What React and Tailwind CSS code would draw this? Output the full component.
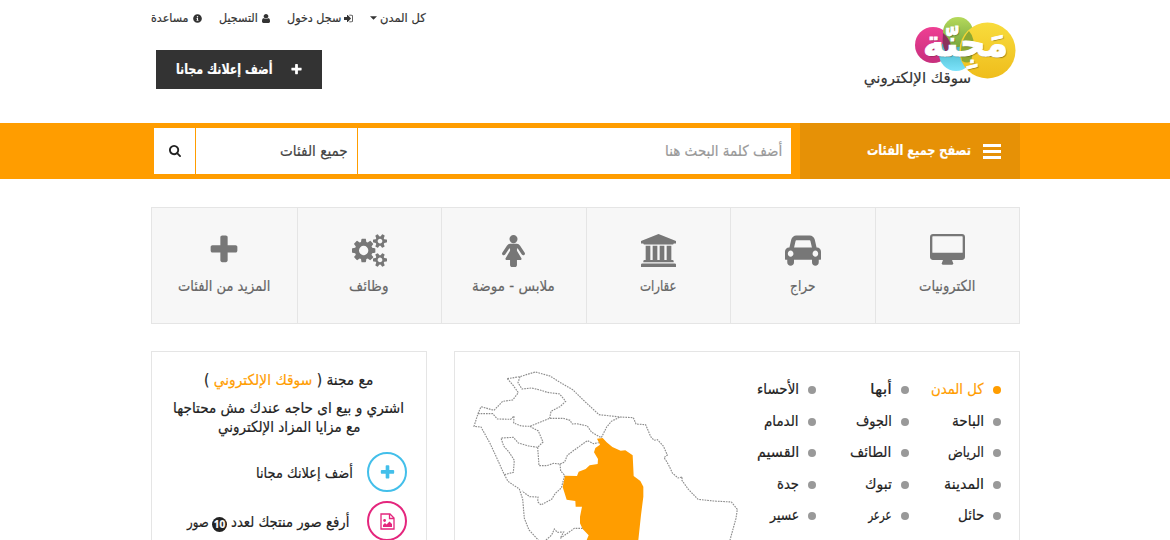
import { useLayoutEffect, useRef } from "react";
import { FaInfoCircle } from "react-icons/fa";

const ICONS = {
  plus: ["0 0 1792 1792", "M1600 736v192q0 40-28 68t-68 28h-416v416q0 40-28 68t-68 28h-192q-40 0-68-28t-28-68v-416h-416q-40 0-68-28t-28-68v-192q0-40 28-68t68-28h416v-416q0-40 28-68t68-28h192q40 0 68 28t28 68v416h416q40 0 68 28t28 68z"],
  desktop: ["0 0 1920 1792", "M1792 992v-832q0-13-9.5-22.5t-22.5-9.5h-1600q-13 0-22.5 9.5t-9.5 22.5v832q0 13 9.5 22.5t22.5 9.5h1600q13 0 22.5-9.5t9.5-22.5zm128-832v1088q0 66-47 113t-113 47h-544q0 37 16 77.5t32 71 16 43.5q0 26-19 45t-45 19h-512q-26 0-45-19t-19-45q0-14 16-44t32-70 16-78h-544q-66 0-113-47t-47-113v-1088q0-66 47-113t113-47h1600q66 0 113 47t47 113z"],
  car: ["0 0 2048 1792", "M480 1088q0-66-47-113t-113-47-113 47-47 113 47 113 113 47 113-47 47-113zm36-320h1016l-89-357q-2-8-14-17.5t-21-9.5h-768q-9 0-21 9.5t-14 17.5zm1372 320q0-66-47-113t-113-47-113 47-47 113 47 113 113 47 113-47 47-113zm160-96v384q0 14-9 23t-23 9h-96v128q0 80-56 136t-136 56-136-56-56-136v-128h-1024v128q0 80-56 136t-136 56-136-56-56-136v-128h-96q-14 0-23-9t-9-23v-384q0-93 65.5-158.5t158.5-65.5h28l105-419q23-94 104-157.5t179-63.5h768q98 0 179 63.5t104 157.5l105 419h28q93 0 158.5 65.5t65.5 158.5z"],
  bank: ["0 0 1920 1792", "M960 0l960 384v128h-128q0 26-20.5 45t-48.5 19h-1526q-28 0-48.5-19t-20.5-45h-128v-128zm-704 640h256v768h128v-768h256v768h128v-768h256v768h128v-768h256v768h59q28 0 48.5 19t20.5 45v64h-1664v-64q0-26 20.5-45t48.5-19h59v-768zm1595 960q28 0 48.5 19t20.5 45v128h-1920v-128q0-26 20.5-45t48.5-19h1782z"],
  female: ["128 32 1280 1760", "M1408 1056q0 40-28 68t-68 28q-51 0-80-43l-227-341h-45v132l247 411q9 15 9 33 0 26-19 45t-45 19h-192v272q0 46-33 79t-79 33h-160q-46 0-79-33t-33-79v-272h-192q-26 0-45-19t-19-45q0-18 9-33l247-411v-132h-45l-227 341q-29 43-80 43-40 0-68-28t-28-68q0-29 16-53l256-384q73-107 176-107h384q103 0 176 107l256 384q16 24 16 53zm-416-800q0 93-65.5 158.5t-158.5 65.5-158.5-65.5-65.5-158.5 65.5-158.5 158.5-65.5 158.5 65.5 65.5 158.5z"],
  cogs: ["0 0 1920 1792", "M896 896q0-106-75-181t-181-75-181 75-75 181 75 181 181 75 181-75 75-181zM1664 1408q0-52-38-90t-90-38-90 38-38 90q0 53 37.5 90.5t90.5 37.5 90.5-37.5 37.5-90.5zM1664 384q0-52-38-90t-90-38-90 38-38 90q0 53 37.5 90.5t90.5 37.5 90.5-37.5 37.5-90.5zM1280 805v185q0 10-7 19.5t-16 10.5l-155 24q-11 35-32 76 34 48 90 115 7 11 7 20 0 12-7 19-23 30-82.5 89.5t-78.5 59.5q-11 0-21-7l-115-90q-37 19-77 31-11 108-23 155-7 24-30 24h-186q-11 0-20-7.5t-10-17.5l-23-153q-34-10-75-31l-118 89q-7 7-20 7-11 0-21-8-144-133-144-160 0-9 7-19 10-14 41-53t47-61q-23-44-35-82l-152-24q-10-1-17-9.5t-7-19.5v-185q0-10 7-19.5t16-10.5l155-24q11-35 32-76-34-48-90-115-7-11-7-20 0-12 7-20 22-30 82-89t79-59q11 0 21 7l115 90q34-18 77-32 11-108 23-154 7-24 30-24h186q11 0 20 7.5t10 17.5l23 153q34 10 75 31l118-89q8-7 20-7 11 0 21 8 144 133 144 160 0 8-7 19-12 16-42 54t-45 60q23 48 34 82l152 23q10 2 17 10.5t7 19.5zM1920 1338v140q0 16-149 31-12 27-30 52 51 113 51 138 0 4-4 7-122 71-124 71-8 0-46-47t-52-68q-20 2-30 2t-30-2q-14 21-52 68t-46 47q-2 0-124-71-4-3-4-7 0-25 51-138-18-25-30-52-149-15-149-31v-140q0-16 149-31 13-29 30-52-51-113-51-138 0-4 4-7 4-2 35-20t59-34 30-16q8 0 46 46.5t52 67.5q20-2 30-2t30 2q51-71 92-112l6-2q4 0 124 70 4 3 4 7 0 25-51 138 17 23 30 52 149 15 149 31zM1920 314v140q0 16-149 31-12 27-30 52 51 113 51 138 0 4-4 7-122 71-124 71-8 0-46-47t-52-68q-20 2-30 2t-30-2q-14 21-52 68t-46 47q-2 0-124-71-4-3-4-7 0-25 51-138-18-25-30-52-149-15-149-31v-140q0-16 149-31 13-29 30-52-51-113-51-138 0-4 4-7 4-2 35-20t59-34 30-16q8 0 46 46.5t52 67.5q20-2 30-2t30 2q51-71 92-112l6-2q4 0 124 70 4 3 4 7 0 25-51 138 17 23 30 52 149 15 149 31z"],
  user: ["256 128 1280 1536", "M1536 1399q0 109-62.5 187t-150.5 78h-854q-88 0-150.5-78t-62.5-187q0-85 8.5-160.5t31.5-152 58.5-131 94-89 134.5-34.5q131 128 313 128t313-128q76 0 134.5 34.5t94 89 58.5 131 31.5 152 8.5 160.5zm-256-887q0 159-112.5 271.5t-271.5 112.5-271.5-112.5-112.5-271.5 112.5-271.5 271.5-112.5 271.5 112.5 112.5 271.5z"],
  signin: ["128 128 1536 1536", "M1312 896q0 26-19 45l-544 544q-19 19-45 19t-45-19-19-45v-288h-448q-26 0-45-19t-19-45v-384q0-26 19-45t45-19h448v-288q0-26 19-45t45-19 45 19l544 544q19 19 19 45zm352-352v704q0 119-84.5 203.5t-203.5 84.5h-320q-13 0-22.5-9.5t-9.5-22.5q0-4-1-20t-.5-26.5 3-23.5 10-19.5 20.5-6.5h320q66 0 113-47t47-113v-704q0-66-47-113t-113-47h-312l-11.5-1-11.5-3-8-5.5-7-9-2-13.5q0-4-1-20t-.5-26.5 3-23.5 10-19.5 20.5-6.5h320q119 0 203.5 84.5t84.5 203.5z"],
  search: ["64 128 1664 1664", "M1216 832q0-185-131.5-316.5t-316.5-131.5-316.5 131.5-131.5 316.5 131.5 316.5 316.5 131.5 316.5-131.5 131.5-316.5zm512 832q0 52-38 90t-90 38q-54 0-90-38l-343-342q-179 124-399 124-143 0-273.5-55.5t-225-150-150-225-55.5-273.5 55.5-273.5 150-225 225-150 273.5-55.5 273.5 55.5 225 150 150 225 55.5 273.5q0 220-124 399l343 343q37 37 37 90z"],
};

function Icon({ name, className }) {
  const [box, d] = ICONS[name];
  return (
    <svg viewBox={box} preserveAspectRatio="none" className={`shrink-0 ${className}`} fill="currentColor">
      <path d={d} fillRule={name === "cogs" ? "evenodd" : "nonzero"} />
    </svg>
  );
}

/* A single line of text, condensed or widened to a given width. */
function Fit({ w, className = "", children }) {
  const inner = useRef(null);
  useLayoutEffect(() => {
    const el = inner.current;
    el.style.transform = `scaleX(${w / el.offsetWidth})`;
  }, [w]);
  return (
    <span className={`flex shrink-0 ${className}`} style={{ width: w }}>
      <span ref={inner} className="block shrink-0 origin-right whitespace-nowrap">
        {children}
      </span>
    </span>
  );
}

function Logo() {
  return (
    <div className="relative h-[75px] w-[156px]">
      <svg viewBox="864 14 156 75" className="h-[75px] w-[156px]">
        <defs>
          <linearGradient id="pink" x2="0" y2="1"><stop stopColor="#ee3f93" /><stop offset="1" stopColor="#c72f7d" /></linearGradient>
          <linearGradient id="yellow" x2="0" y2="1"><stop stopColor="#f8dc3c" /><stop offset="1" stopColor="#efbd1c" /></linearGradient>
          <linearGradient id="green" x2="0" y2="1"><stop stopColor="#b5d95b" /><stop offset="1" stopColor="#77a63d" /></linearGradient>
          <linearGradient id="blue" x2="0" y2="1"><stop stopColor="#35a7b5" /><stop offset="1" stopColor="#7ce3fb" /></linearGradient>
        </defs>
        <circle cx="933" cy="45" r="18" fill="url(#pink)" />
        <circle cx="956" cy="54" r="17" fill="url(#blue)" />
        <circle cx="958" cy="32" r="15" fill="url(#green)" />
        <path d="M943 33Q955 43 949 57Q941 49 943 33Z" fill="#8b315c" />
        <circle cx="987.5" cy="50.5" r="28" fill="url(#yellow)" />
        <path d="M969 31Q958 43 962 61Q974 67 972 49Q976 39 969 31Z" fill="#8da832" />
      </svg>
      <div className="absolute top-[6px] right-[12px] text-[37px] leading-[48px] font-bold text-white [-webkit-text-stroke:1px_white] [text-shadow:1px_1px_1px_#0006]">
        <Fit w={85}>مَجِنّة</Fit>
      </div>
      <div className="absolute top-[54px] right-[49px] text-[15px] leading-[20px] text-[#333]">
        <Fit w={107}>سوقك الإلكتروني</Fit>
      </div>
    </div>
  );
}

const CATEGORIES = [
  ["الكترونيات", 56, <Icon name="desktop" className="h-[33px] w-[35px]" />],
  ["حراج", 25, <Icon name="car" className="mt-[-1px] h-[34px] w-[36px]" />],
  ["عقارات", 37, <Icon name="bank" className="h-[33px] w-[35px]" />],
  ["ملابس - موضة", 83, <Icon name="female" className="mt-px h-[32px] w-[23px]" />],
  ["وظائف", 39, <Icon name="cogs" className="h-[33px] w-[35px]" />],
  ["المزيد من الفئات", 92, <Icon name="plus" className="mt-[-1px] h-[34px] w-[34px]" />],
];

const CITIES = [
  [["كل المدن", 53], ["الباحة", 32], ["الرياض", 36], ["المدينة", 40], ["حائل", 26]],
  [["أبها", 22], ["الجوف", 36], ["الطائف", 41], ["تبوك", 27], ["عرعر", 23]],
  [["الأحساء", 42], ["الدمام", 35], ["القسيم", 42], ["جدة", 22], ["عسير", 29]],
];

function SaudiMap() {
  return (
    <svg viewBox="15 21 885 564" className="h-[188px] w-[295px] shrink-0">
      <g fill="none" stroke="#8c8c8c" strokeWidth="3.4" strokeDasharray="5 3">
        <path d="M172 101L210 95L232 88L256 81L300 93L330 112L368 134L405 170L447 209L510 216L550 218L558 237L587 239L602 275L612 286L622 284L640 303L652 330L642 338L647 345L657 362L667 384L684 399L697 396L695 405L715 433L744 463L790 468L844 471L862 493L858 520L840 585" />
        <path d="M172 101L190 122L205 143L188 165L158 169L132 196L93 185L84 206L72 244L93 246L120 295L140 338L162 387L174 409L208 432L218 462L223 520L237 555L265 585" />
        <path d="M210 95L204 113L216 132L245 129L270 135L292 142L329 147L347 169L330 185L303 199L299 220" />
        <path d="M84 206L128 206L142 222L182 223L192 213L191 234L214 243L240 244L299 220L340 220L360 226L367 237L380 236L412 243L425 262L454 278L470 246L484 229L510 216" />
        <path d="M240 244L265 258L279 291L263 307L236 303L205 294L190 277L153 279L161 303L177 321L193 346L190 382L163 389" />
        <path d="M263 307L267 362L290 362L311 355L330 357L344 351L352 331L373 315L412 287L431 296L446 293" />
        <path d="M330 357L332 378L344 391L334 429L316 445L305 463L273 480L263 470L264 456L239 455L216 438" />
        <path d="M288 585L305 570L313 552L322 562L341 561L331 580L373 550L398 550" />
      </g>
      <path d="M441 281L458 279L470 292L487 306L512 317L526 316L548 331L551 393L571 408L580 425L580 455L573 510L565 585H410L416 571L398 552L390 535V515L396 485H377L376 468L350 464L338 426L345 392L381 393L386 380L407 372L419 361L443 357L444 342L432 322L436 309L450 299Z" fill="#ff9d00" />
    </svg>
  );
}

export default function App() {
  return (
    <div dir="rtl" className="h-[540px] w-[1170px] overflow-hidden bg-white font-['DejaVu_Sans',sans-serif] text-[13px] text-[#333] [-webkit-text-stroke:0.2px_currentColor]">
      <header className="mx-auto mr-[150px] flex h-[123px] w-[869px] justify-between">
        <div className="pt-[14px]"><Logo /></div>
        <div className="w-[275px] pt-[8px]">
          <nav className="flex h-5 items-center text-[12px] leading-5">
            <Fit w={46}>كل المدن</Fit>
            <svg viewBox="0 0 8 4" className="mr-[3px] ml-[17px] h-1 w-[7px]"><path d="M0 0H8L4 4Z" fill="#333" /></svg>
            <Icon name="signin" className="ml-[3px] h-[9px] w-[9px]" />
            <Fit w={54} className="ml-[17px]">سجل دخول</Fit>
            <Icon name="user" className="ml-[4px] h-[9px] w-[8px]" />
            <Fit w={39} className="ml-[17px]">التسجيل</Fit>
            <FaInfoCircle className="ml-[4px] h-[9px] w-[9px]" />
            <Fit w={38}>مساعدة</Fit>
          </nav>
          <div className="mt-[22px] mr-[104px] flex h-[39px] w-[166px] items-center bg-[#333] pr-[19px] text-[14px] font-bold text-white">
            <Icon name="plus" className="ml-[17px] h-[13px] w-[13px]" />
            <Fit w={97}>أضف إعلانك مجانا</Fit>
          </div>
        </div>
      </header>

      <div className="h-[56px] bg-[#ff9d00]">
        <div className="mr-[150px] flex h-full w-[869px]">
          <div className="flex h-full w-[220px] items-center bg-[#e69106] pr-[19px] text-[14px] font-bold text-white">
            <span className="mt-[1px] ml-[12px] flex w-[18px] flex-col gap-[3px]">
              <i className="h-[3px] bg-white" /><i className="h-[3px] bg-white" /><i className="h-[3px] bg-white" />
            </span>
            <Fit w={104} className="-mt-[2px]">تصفح جميع الفئات</Fit>
          </div>
          <div className="mt-[5px] mr-[9px] flex h-[46px] w-[637px] text-[15px]">
            <div className="flex w-[433px] items-center bg-white pr-[9px] text-[#999]"><Fit w={117}>أضف كلمة البحث هنا</Fit></div>
            <div className="flex w-[162px] items-center border-r border-[#ff9d00] bg-white pr-[9px] text-[#444]"><Fit w={68}>جميع الفئات</Fit></div>
            <div className="flex flex-1 items-center justify-center border-r border-[#ff9d00] bg-white"><Icon name="search" className="h-[12px] w-[12px] text-[#222]" /></div>
          </div>
        </div>
      </div>

      <div className="mt-[28px] mr-[150px] grid h-[117px] w-[869px] grid-cols-6 border border-[#e5e5e5] bg-[#f7f7f7] text-[15px] text-[#666]">
        {CATEGORIES.map(([label, w, icon]) => (
          <div key={label} className="flex flex-col items-center border-l border-[#e5e5e5] pt-[26px] last:border-l-0">
            <span className="flex h-[34px] items-start text-[#777]">{icon}</span>
            <Fit w={w} className="mt-[8px] leading-5">{label}</Fit>
          </div>
        ))}
      </div>

      <div className="mt-[27px] mr-[150px] flex w-[869px] justify-between text-[15px] text-[#222]">
        <section className="flex h-[200px] w-[566px] border border-[#e5e5e5]">
          <div className="flex w-[269px] shrink-0 pt-[22px] pr-[18px]">
            {CITIES.map((col, c) => (
              <div key={c} className="w-[92.5px] shrink-0">
                {col.map(([city, w], r) => (
                  <div key={city} className={`flex h-[31.5px] items-start leading-[30px] ${c + r === 0 ? "text-[#ff9d00]" : ""}`}>
                    <i className={`mt-[12px] ml-[9px] h-[8px] w-[8px] rounded-full ${c + r === 0 ? "bg-[#ff9d00]" : "bg-[#999]"}`} />
                    <Fit w={w}>{city}</Fit>
                  </div>
                ))}
              </div>
            ))}
          </div>
          <SaudiMap />
        </section>
        <section className="h-[200px] w-[276px] border border-[#e5e5e5] pt-[18px]">
          <div className="flex flex-col items-center">
            <Fit w={169} className="leading-5">مع مجنة ( <span className="text-[#ff9d00]">سوقك الإلكتروني</span> )</Fit>
            <Fit w={231} className="mt-[9px] leading-[19px]">اشتري و بيع اى حاجه عندك مش محتاجها</Fit>
            <Fit w={142} className="leading-[19px]">مع مزايا المزاد الإلكتروني</Fit>
          </div>
          <div className="mt-[15px] mr-[19px] flex h-[40px] items-center">
            <span className="ml-[14px] flex h-10 w-10 items-center justify-center rounded-full border-2 border-[#43bfea] text-[#43bfea]"><Icon name="plus" className="h-[17px] w-[17px]" /></span>
            <Fit w={97} className="mt-[3px]">أضف إعلانك مجانا</Fit>
          </div>
          <div className="mt-[9px] mr-[19px] flex h-[40px] items-center">
            <span className="ml-[18px] flex h-10 w-10 items-center justify-center rounded-full border-2 border-[#e4267d] text-[#e4267d]">
              <svg viewBox="0 0 15 17" className="h-[17px] w-[15px]" fill="none" stroke="currentColor" strokeWidth="1.3">
                <path d="M1 1H10L14 5V16H1ZM9.5 1V5.5H14" />
                <path d="M3 14V12L5 10L6.5 11.5L9.5 8.5L12 11V14Z" fill="currentColor" stroke="none" />
                <circle cx="4.6" cy="7.5" r="1.4" fill="currentColor" stroke="none" />
              </svg>
            </span>
            <Fit w={118} className="mt-[3px]">أرفع صور منتجك لعدد</Fit>
            <b className="mt-[6px] mr-[4px] ml-[3px] flex h-[15px] w-[15px] items-center justify-center rounded-full bg-[#222] font-['Open_Sans',sans-serif] text-[10px] text-white">10</b>
            <Fit w={22} className="mt-[3px]">صور</Fit>
          </div>
        </section>
      </div>
    </div>
  );
}
